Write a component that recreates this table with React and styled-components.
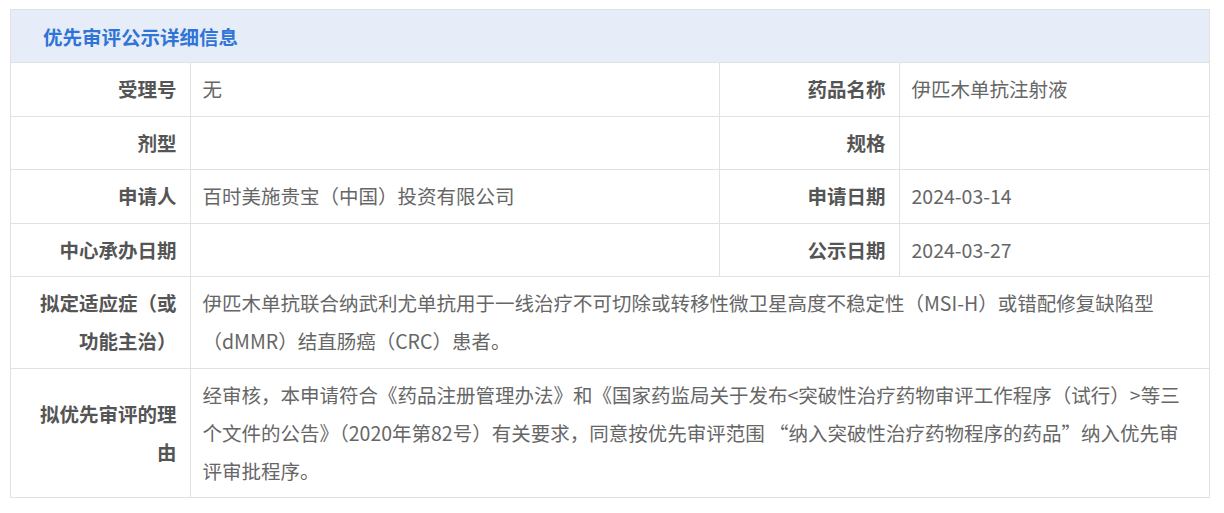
import styled, { createGlobalStyle } from "styled-components";

const GlobalStyle = createGlobalStyle`
    body {
        margin: 0;
        background: #ffffff;
        font-family: "Noto Sans CJK SC", "Noto Sans", sans-serif;
    }
`;

const Panel = styled.div`
    width: 1200px;
    margin: 9px 10px;
    border: 1px solid #e2e2e2;
    box-sizing: border-box;
`;

const PanelHead = styled.div`
    height: 52px;
    display: flex;
    align-items: center;
    padding-left: 32px;
    background: #e6edf9;
    border-bottom: 1px solid #e2e2e2;
    color: #2f74d6;
    font-size: 19.5px;
    font-weight: bold;
`;

const Table = styled.table`
    width: 100%;
    border-collapse: collapse;
    table-layout: fixed;
    font-size: 19.5px;
    line-height: 38px;
    tr + tr td {
        border-top: 1px solid #e2e2e2;
    }
`;

const Label = styled.td`
    padding: 7.25px 13px;
    text-align: right;
    vertical-align: middle;
    color: #555555;
    font-weight: bold;
    border-right: 1px solid #e2e2e2;
    & + td + & {
        border-left: 1px solid #e2e2e2;
    }
`;

const Value = styled.td`
    padding: 7.25px 13px 7.25px 12px;
    vertical-align: middle;
    color: #666666;
`;

const rows = [
    [["受理号", "无"], ["药品名称", "伊匹木单抗注射液"]],
    [["剂型", ""], ["规格", ""]],
    [["申请人", "百时美施贵宝（中国）投资有限公司"], ["申请日期", "2024-03-14"]],
    [["中心承办日期", ""], ["公示日期", "2024-03-27"]],
];

const wide = [
    ["拟定适应症（或功能主治）", "伊匹木单抗联合纳武利尤单抗用于一线治疗不可切除或转移性微卫星高度不稳定性（MSI-H）或错配修复缺陷型（dMMR）结直肠癌（CRC）患者。"],
    ["拟优先审评的理由", "经审核，本申请符合《药品注册管理办法》和《国家药监局关于发布<突破性治疗药物审评工作程序（试行）>等三个文件的公告》（2020年第82号）有关要求，同意按优先审评范围 “纳入突破性治疗药物程序的药品”纳入优先审评审批程序。"],
];

function App() {
    return (
        <>
            <GlobalStyle />
            <Panel>
                <PanelHead>优先审评公示详细信息</PanelHead>
                <Table>
                    <colgroup>
                        <col style={{ width: "179px" }} />
                        <col style={{ width: "529px" }} />
                        <col style={{ width: "180px" }} />
                        <col />
                    </colgroup>
                    <tbody>
                        {rows.map((r, i) => (
                            <tr key={i}>
                                <Label>{r[0][0]}</Label>
                                <Value>{r[0][1]}</Value>
                                <Label>{r[1][0]}</Label>
                                <Value>{r[1][1]}</Value>
                            </tr>
                        ))}
                        {wide.map(([k, v]) => (
                            <tr key={k}>
                                <Label>{k}</Label>
                                <Value colSpan={3}>{v}</Value>
                            </tr>
                        ))}
                    </tbody>
                </Table>
            </Panel>
        </>
    );
}

export default App;
